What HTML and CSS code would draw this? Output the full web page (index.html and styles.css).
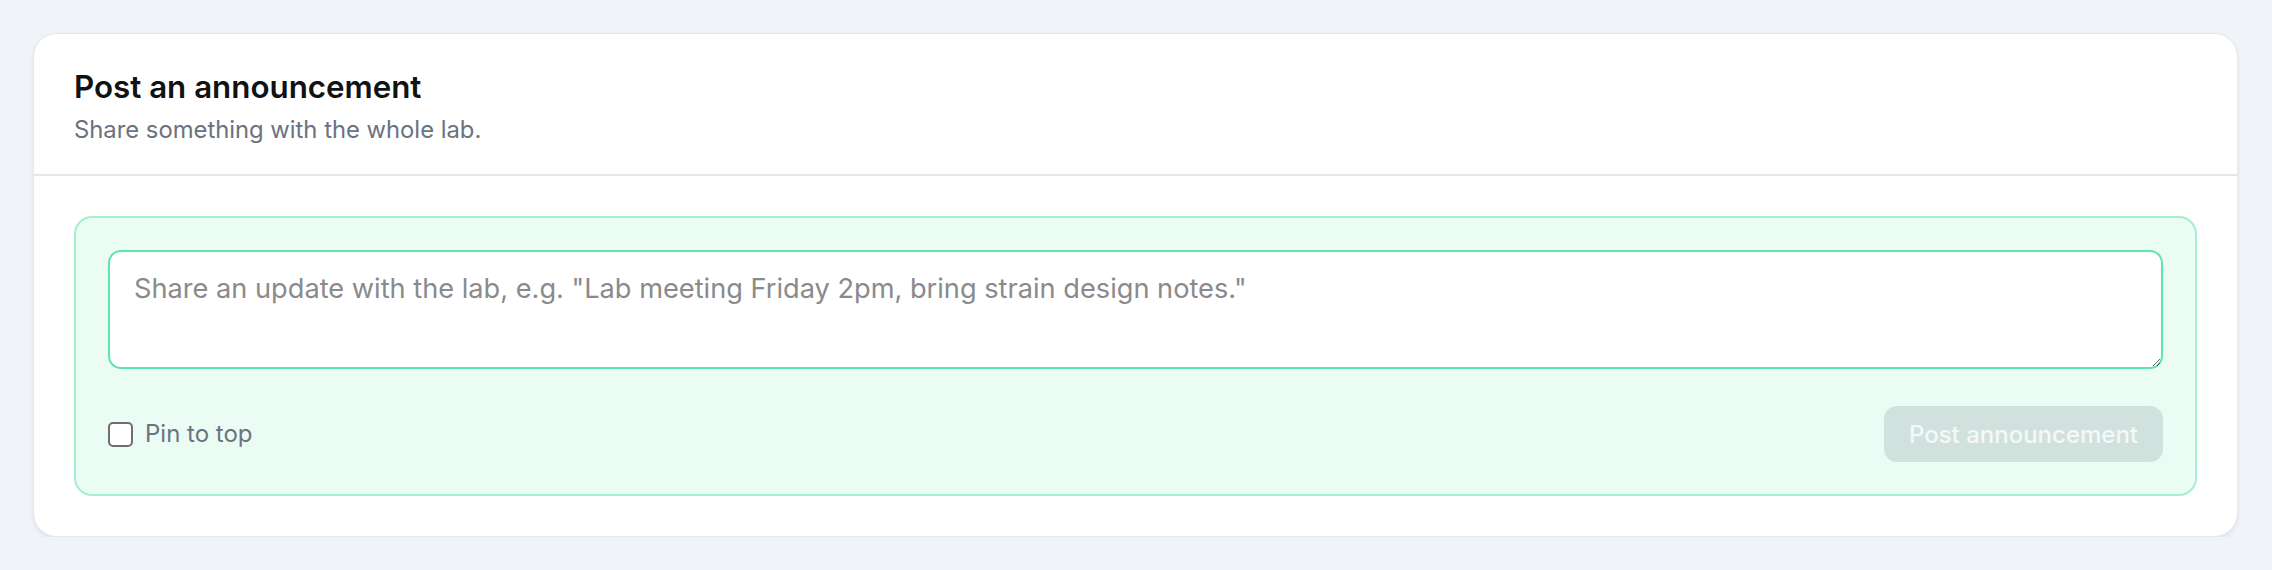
FILE: index.html
```html
<!DOCTYPE html>
<html lang="en">
<head>
<meta charset="utf-8">
<title>Post an announcement</title>
<link rel="stylesheet" href="styles.css">
</head>
<body>
<section class="card">
  <header class="card-header">
    <h2 class="card-title">Post an announcement</h2>
    <p class="card-subtitle">Share something with the whole lab.</p>
  </header>
  <div class="card-body">
    <form class="composer">
      <textarea class="composer-input" placeholder="Share an update with the lab, e.g. &quot;Lab meeting Friday 2pm, bring strain design notes.&quot;"></textarea>
      <div class="composer-footer">
        <label class="pin">
          <input type="checkbox" class="pin-box">
          <span class="pin-label">Pin to top</span>
        </label>
        <button type="button" class="post-btn" disabled>Post announcement</button>
      </div>
    </form>
  </div>
</section>
</body>
</html>
```

FILE: styles.css
```css
* { box-sizing: border-box; }

html, body {
  margin: 0;
  background: #f0f3f8;
  font-family: Inter, "Noto Sans", "Liberation Sans", sans-serif;
}

body {
  padding: 33px 34px 0 33px;
}

.card {
  background: #ffffff;
  border: 1px solid #e6e8ed;
  border-radius: 24px;
  box-shadow: 0 2px 4px rgba(15, 23, 42, 0.08);
}

.card-header {
  padding: 32px 40px 28px;
  border-bottom: 2px solid #e6e7ec;
}

.card-title {
  margin: 0;
  font-size: 31.3px;
  line-height: 42px;
  font-weight: 600;
  color: #111214;
}

.card-subtitle {
  margin: 6px 0 0;
  font-size: 23.8px;
  line-height: 32px;
  color: #6b7280;
}

.card-body {
  padding: 40px;
}

.composer {
  margin: 0;
  background: #ebfcf4;
  border: 2px solid #a3f0cd;
  border-radius: 18px;
  padding: 32px;
}

.composer-input {
  display: block;
  width: 100%;
  height: 119px;
  margin: 0;
  padding: 17px 24px 15px;
  border: 2px solid #5ce5b0;
  border-radius: 13px;
  background: #ffffff;
  font-family: inherit;
  font-size: 27.2px;
  line-height: 40px;
  color: #111214;
  resize: vertical;
  outline: none;
}

.composer-input::placeholder {
  color: #8a8a8c;
}

.composer-footer {
  margin-top: 37px;
  display: flex;
  align-items: center;
  justify-content: space-between;
}

.pin {
  display: flex;
  align-items: center;
  gap: 12px;
  cursor: pointer;
}

.pin-box {
  appearance: none;
  -webkit-appearance: none;
  margin: 0;
  width: 25px;
  height: 25px;
  border: 2px solid #6f6f6f;
  border-radius: 5px;
  background: #ffffff;
}

.pin-label {
  font-size: 24px;
  line-height: 32px;
  color: #6b7280;
}

.post-btn {
  height: 56px;
  padding: 0 25px;
  border: none;
  border-radius: 13px;
  background: #d1e2de;
  color: #f4f9f7;
  font-family: inherit;
  font-size: 24px;
  font-weight: 500;
}
```
